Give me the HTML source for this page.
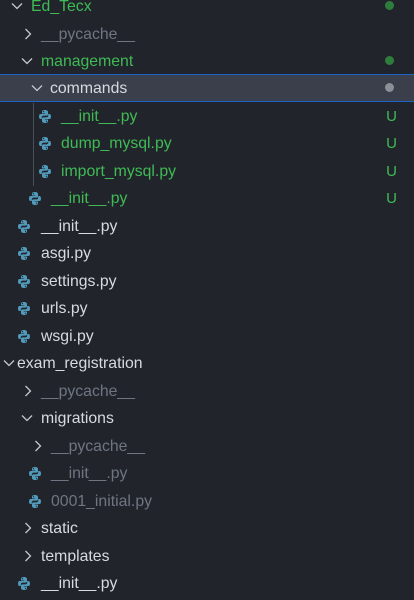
<!DOCTYPE html><html><head><style>
body{margin:0;width:414px;height:600px;background:#21252b;overflow:hidden;font-family:"Liberation Sans",sans-serif;font-size:15.8px;position:relative}
.r{position:absolute;left:0;width:414px;height:27px;line-height:29px;color:#d7dae0}
.t{position:absolute;top:0}
.g{color:#3fbb55}.d{color:#6f7682}
.c{position:absolute;top:8px;width:12px;height:12px}
.i{position:absolute;top:8px}
.dot{position:absolute;right:20px;top:9px;width:9px;height:9px;border-radius:50%;background:#2f7d3d}
.u{position:absolute;right:17px;top:0;color:#3fbb55;font-size:15px}
.sel{background:#3a3f4b;border-top:1px solid #1a65c8;border-bottom:1px solid #1a65c8;height:26px}
</style></head><body>
<svg width="0" height="0" style="position:absolute"><defs>
<symbol id="py" viewBox="0 0 12 13"><path d="M6 0C3 0 3 1.3 3 2V3.5H6.2V4H1.5C0.5 4 0 5 0 6.5S0.6 9 1.5 9H2.8V7.4C2.8 6.3 3.7 5.6 4.6 5.6H7.6C8.5 5.6 9 5 9 4.2V2C9 0.8 7.8 0 6 0Z" fill="#519aba"/><path d="M6 13C9 13 9 11.7 9 11V9.5H5.8V9H10.5C11.5 9 12 8 12 6.5S11.4 4 10.5 4H9.2V5.6C9.2 6.7 8.3 7.4 7.4 7.4H4.4C3.5 7.4 3 8 3 8.8V11C3 12.2 4.2 13 6 13Z" fill="#519aba"/><circle cx="4.5" cy="1.6" r=".6" fill="#21252b"/><circle cx="7.5" cy="11.4" r=".6" fill="#21252b"/></symbol>
<symbol id="dn" viewBox="0 0 12 12"><path d="M1 3.5L6 8.5L11 3.5" stroke="#c5c8ce" stroke-width="1.3" fill="none"/></symbol>
<symbol id="rt" viewBox="0 0 12 12"><path d="M3.5 1L8.5 6L3.5 11" stroke="#c5c8ce" stroke-width="1.3" fill="none"/></symbol>
</defs></svg>
<div style="position:absolute;left:33px;top:103px;width:1px;height:83px;background:#4a4f58"></div>

<div class="r" style="top:-8px"><svg class="c" style="left:11px"><use href="#dn"/></svg><span class="t g" style="left:31px">Ed_Tecx</span><span class="dot"></span></div>
<div class="r" style="top:20px"><svg class="c" style="left:22px"><use href="#rt"/></svg><span class="t d" style="left:41px">__pycache__</span></div>
<div class="r" style="top:47px"><svg class="c" style="left:21px"><use href="#dn"/></svg><span class="t g" style="left:41px">management</span><span class="dot"></span></div>
<div class="r sel" style="top:74px"><svg class="c" style="left:31px;top:7px"><use href="#dn"/></svg><span class="t" style="left:50px;top:-1px">commands</span><span class="dot" style="background:#8b8f96;top:8px"></span></div>
<div class="r" style="top:102px"><svg class="i" style="left:39px" width="12" height="13"><use href="#py"/></svg><span class="t g" style="left:61px">__init__.py</span><span class="u">U</span></div>
<div class="r" style="top:129px"><svg class="i" style="left:39px" width="12" height="13"><use href="#py"/></svg><span class="t g" style="left:61px">dump_mysql.py</span><span class="u">U</span></div>
<div class="r" style="top:157px"><svg class="i" style="left:39px" width="12" height="13"><use href="#py"/></svg><span class="t g" style="left:61px">import_mysql.py</span><span class="u">U</span></div>
<div class="r" style="top:184px"><svg class="i" style="left:29px" width="12" height="13"><use href="#py"/></svg><span class="t g" style="left:51px">__init__.py</span><span class="u">U</span></div>
<div class="r" style="top:212px"><svg class="i" style="left:18px" width="12" height="13"><use href="#py"/></svg><span class="t" style="left:41px">__init__.py</span></div>
<div class="r" style="top:239px"><svg class="i" style="left:18px" width="12" height="13"><use href="#py"/></svg><span class="t" style="left:41px">asgi.py</span></div>
<div class="r" style="top:267px"><svg class="i" style="left:18px" width="12" height="13"><use href="#py"/></svg><span class="t" style="left:41px">settings.py</span></div>
<div class="r" style="top:294px"><svg class="i" style="left:18px" width="12" height="13"><use href="#py"/></svg><span class="t" style="left:41px">urls.py</span></div>
<div class="r" style="top:322px"><svg class="i" style="left:18px" width="12" height="13"><use href="#py"/></svg><span class="t" style="left:41px">wsgi.py</span></div>
<div class="r" style="top:349px"><svg class="c" style="left:3px"><use href="#dn"/></svg><span class="t" style="left:17px">exam_registration</span></div>
<div class="r" style="top:377px"><svg class="c" style="left:22px"><use href="#rt"/></svg><span class="t d" style="left:41px">__pycache__</span></div>
<div class="r" style="top:404px"><svg class="c" style="left:21px"><use href="#dn"/></svg><span class="t" style="left:41px">migrations</span></div>
<div class="r" style="top:432px"><svg class="c" style="left:32px"><use href="#rt"/></svg><span class="t d" style="left:51px">__pycache__</span></div>
<div class="r" style="top:459px"><svg class="i" style="left:29px" width="12" height="13"><use href="#py"/></svg><span class="t d" style="left:51px">__init__.py</span></div>
<div class="r" style="top:487px"><svg class="i" style="left:29px" width="12" height="13"><use href="#py"/></svg><span class="t d" style="left:51px">0001_initial.py</span></div>
<div class="r" style="top:514px"><svg class="c" style="left:22px"><use href="#rt"/></svg><span class="t" style="left:41px">static</span></div>
<div class="r" style="top:542px"><svg class="c" style="left:22px"><use href="#rt"/></svg><span class="t" style="left:41px">templates</span></div>
<div class="r" style="top:569px"><svg class="i" style="left:18px" width="12" height="13"><use href="#py"/></svg><span class="t" style="left:41px">__init__.py</span></div>
</body></html>
